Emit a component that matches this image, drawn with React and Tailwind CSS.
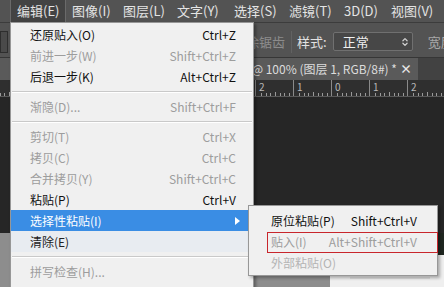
import { ChevronsUpDown } from 'lucide-react'

const font = { fontFamily: '"Noto Sans CJK SC", "Noto Sans", sans-serif' }

const topMenu = [
  ['编辑(E)', 'w-[56px]'],
  ['图像(I)', 'w-[51px]'],
  ['图层(L)', 'w-[54px]'],
  ['文字(Y)', 'w-[57px]'],
  ['选择(S)', 'w-[55px]'],
  ['滤镜(T)', 'w-[55px]'],
  ['3D(D)', 'w-[47px]'],
  ['视图(V)', 'w-[59px]'],
]

const items = [
  { label: '还原贴入(O)', key: 'Ctrl+Z' },
  { label: '前进一步(W)', key: 'Shift+Ctrl+Z', off: true },
  { label: '后退一步(K)', key: 'Alt+Ctrl+Z' },
  { sep: true },
  { label: '渐隐(D)...', key: 'Shift+Ctrl+F', off: true },
  { sep: true },
  { label: '剪切(T)', key: 'Ctrl+X', off: true },
  { label: '拷贝(C)', key: 'Ctrl+C', off: true },
  { label: '合并拷贝(Y)', key: 'Shift+Ctrl+C', off: true },
  { label: '粘贴(P)', key: 'Ctrl+V' },
  { label: '选择性粘贴(I)', sub: true },
  { label: '清除(E)', hover: true },
  { sep: true },
  { label: '拼写检查(H)...', off: true },
  { label: '查找和替换文本(X)...', off: true },
]

const rulerNums = ['9', '8', '7', '6', '5', '4', '3', '2', '1', '0', '1', '2']

function Ticks() {
  return (
    <svg width="38" height="4" className="absolute bottom-0 left-0">
      {[5, 10, 14, 19, 24, 28, 33].map(x => (
        <line key={x} x1={x + 0.5} y1={x === 19 ? 0 : 1} x2={x + 0.5} y2="4" stroke="#9a9a9a" strokeWidth="1" />
      ))}
    </svg>
  )
}

export default function App() {
  return (
    <div className="relative w-[444px] h-[287px] overflow-hidden bg-[#262626] flex flex-col" style={font}>
      {/* menu bar */}
      <div className="h-[22px] bg-[#535353] flex items-stretch pl-[10px] text-[13px] text-[#e4e4e4]">
        {topMenu.map(([t, w], i) => (
          <div key={t} className={`${w} pl-[6px] flex items-center shrink-0 whitespace-nowrap ${i === 0 ? 'bg-[#434343] border-x border-[#6a6a6a]' : ''}`}>
            {t}
          </div>
        ))}
      </div>

      {/* options bar */}
      <div className="h-[35px] bg-[#535353] border-t border-[#3c3c3c] flex items-center pt-[3px] text-[13px] whitespace-nowrap">
        <div className="w-[10px] shrink-0 self-stretch flex items-center">
          <div className="w-[8px] h-[22px] border border-[#2e2e2e] bg-[#4a4a4a]" />
        </div>
        <div className="ml-[186px] shrink-0 text-[#8c8c8c] w-[89px] text-right">消除锯齿</div>
        <div className="ml-[6px] shrink-0 w-px h-[22px] bg-[#3a3a3a] border-r border-[#626262]" />
        <div className="ml-[5px] shrink-0 text-[#e2e2e2]">样式:</div>
        <div className="ml-[6px] shrink-0 w-[80px] h-[19px] bg-[#474747] border border-[#707070] rounded-[2px] flex items-center pl-[9px] pr-[2px] text-[#f0f0f0]">
          <span className="flex-1">正常</span>
          <ChevronsUpDown size={10} strokeWidth={3} className="text-[#d0d0d0]" />
        </div>
        <div className="ml-[15px] shrink-0 text-[#a8a8a8]">宽度</div>
      </div>

      {/* document tab */}
      <div className="h-[23px] bg-[#424242] flex border-t border-[#363636]">
        <div className="w-[418px] bg-[#5a5a5a] flex items-center justify-end pr-[6px] gap-[3px] text-[12px] text-[#dcdcdc] whitespace-nowrap">
          <span>未标题-1 @ 100% (图层 1, RGB/8#) *</span>
          <span className="text-[12px] font-bold text-[#e8e8e8]">×</span>
        </div>
      </div>

      {/* ruler */}
      <div className="h-[17px] bg-[#2f2f2f] border-b border-[#5a5a5a] flex -ml-[11px] text-[10px] text-[#b8b8b8]">
        {rulerNums.map((n, i) => (
          <div key={i} className="relative w-[38px] shrink-0 border-l border-[#8a8a8a] pl-[3px] leading-[14px]">
            {n}
            <Ticks />
          </div>
        ))}
      </div>

      {/* canvas */}
      <div className="flex-1 flex flex-col">
        <div className="h-[136px]" />
        <div className="flex-1 bg-[#8d8d8d] flex">
          <div className="w-[330px]" />
          <div className="flex-1 flex flex-col">
            <div className="h-[22px] flex justify-end">
              <div className="w-[6px] bg-[#1f2620]" />
            </div>
            <div className="flex-1 bg-[#efefef] flex items-end pb-[8px] pl-[20px]">
              <div className="h-[2px] w-[80px] bg-[#dedede]" />
            </div>
          </div>
        </div>
      </div>

      {/* edit dropdown */}
      <div className="absolute left-[10px] top-[22px] w-[244px] h-[280px] bg-[#f0f0f0] border border-[#979797] shadow-[2px_2px_3px_rgba(0,0,0,0.35)] pt-[1px] text-[12px]">
        {items.map((it, i) =>
          it.sep ? (
            <div key={i} className="h-[9px] flex flex-col justify-center px-[1px]">
              <div className="h-px bg-[#c9c9c9]" />
              <div className="h-px bg-white" />
            </div>
          ) : (
            <div
              key={i}
              className={`h-[21px] flex items-center pl-[19px] pr-[17px] ${
                it.sub ? 'bg-[#3a8de4] text-white' : it.hover ? 'bg-[#e8ecf1] text-[#222]' : it.off ? 'text-[#9d9d9d]' : 'text-[#111]'
              }`}
            >
              <span className="flex-1">{it.label}</span>
              {it.key && <span>{it.key}</span>}
              {it.sub && (
                <svg width="5" height="8" viewBox="0 0 5 8" className="-mr-[4px]">
                  <path d="M0 0 L5 4 L0 8 Z" fill="#ffffff" />
                </svg>
              )}
            </div>
          )
        )}
      </div>

      {/* paste special submenu */}
      <div className="absolute left-[248px] top-[205px] w-[190px] bg-[#f0f0f0] border border-[#979797] shadow-[2px_2px_3px_rgba(0,0,0,0.3)] pt-[4px] pb-[2px] text-[12px]">
        <div className="h-[21px] flex items-center pl-[22px] pr-[20px] text-[#111]">
          <span className="flex-1">原位粘贴(P)</span>
          <span>Shift+Ctrl+V</span>
        </div>
        <div className="h-[21px] flex items-center pl-[22px] pr-[20px] text-[#9d9d9d]">
          <span className="flex-1">贴入(I)</span>
          <span>Alt+Shift+Ctrl+V</span>
        </div>
        <div className="h-[21px] flex items-center pl-[22px] pr-[20px] text-[#b4b4b4]">
          <span className="flex-1">外部粘贴(O)</span>
        </div>
        <div className="absolute left-[18px] top-[26px] w-[171px] h-[21px] border border-[#c8262c]" />
      </div>
    </div>
  )
}
